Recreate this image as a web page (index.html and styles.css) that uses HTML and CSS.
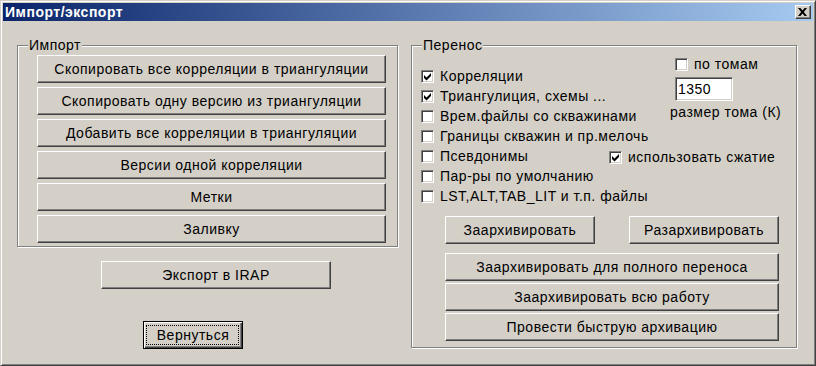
FILE: index.html
```html
<!DOCTYPE html>
<html lang="ru">

<head>
    <meta charset="UTF-8">
    <meta name="viewport" content="width=device-width, initial-scale=1.0">
    <title>Импорт/экспорт</title>
    <link rel="stylesheet" href="styles.css">
</head>

<body>
    <div class="dlg">
        <div class="caption">
            <span class="caption-text">Импорт/экспорт</span>
            <span class="close-btn">
                <svg width="9" height="8" viewBox="0 0 9 8"><path d="M0 0H2.4L4.5 2.4L6.6 0H9L5.8 4L9 8H6.6L4.5 5.6L2.4 8H0L3.2 4Z" fill="#000"/></svg>
            </span>
        </div>

        <div class="client">
            <div class="col-left">
                <div class="group group-import">
                    <span class="legend">Импорт</span>
                    <button class="btn">Скопировать все корреляции в триангуляции</button>
                    <button class="btn">Скопировать одну версию из триангуляции</button>
                    <button class="btn">Добавить все корреляции в триангуляции</button>
                    <button class="btn">Версии одной корреляции</button>
                    <button class="btn">Метки</button>
                    <button class="btn">Заливку</button>
                </div>
                <button class="btn btn-irap">Экспорт в IRAP</button>
                <button class="btn btn-back">Вернуться</button>
            </div>

            <div class="group group-transfer">
                <span class="legend">Перенос</span>
                <div class="opts">
                    <div class="checklist">
                        <div class="chk"><span class="box"><svg width="11" height="11" viewBox="1 1 11 11"><polygon points="3,5 5.5,7.5 10,3 10,6 5.5,10.5 3,8" fill="#000"/></svg></span>Корреляции</div>
                        <div class="chk"><span class="box"><svg width="11" height="11" viewBox="1 1 11 11"><polygon points="3,5 5.5,7.5 10,3 10,6 5.5,10.5 3,8" fill="#000"/></svg></span>Триангулиция, схемы ...</div>
                        <div class="chk"><span class="box"></span>Врем.файлы со скважинами</div>
                        <div class="chk"><span class="box"></span>Границы скважин и пр.мелочь</div>
                        <div class="chk"><span class="box"></span>Псевдонимы</div>
                        <div class="chk"><span class="box"></span>Пар-ры по умолчанию</div>
                        <div class="chk"><span class="box"></span>LST,ALT,TAB_LIT и т.п. файлы</div>
                    </div>
                    <div class="side">
                        <div class="chk chk-vol"><span class="box"></span>по томам</div>
                        <input class="edit" type="text" value="1350">
                        <div class="edit-label">размер тома (К)</div>
                        <div class="chk chk-zip"><span class="box"><svg width="11" height="11" viewBox="1 1 11 11"><polygon points="3,5 5.5,7.5 10,3 10,6 5.5,10.5 3,8" fill="#000"/></svg></span>использовать сжатие</div>
                    </div>
                </div>
                <div class="arch-row">
                    <button class="btn btn-half">Заархивировать</button>
                    <button class="btn btn-half">Разархивировать</button>
                </div>
                <div class="arch-list">
                    <button class="btn btn-wide">Заархивировать для полного переноса</button>
                    <button class="btn btn-wide">Заархивировать всю работу</button>
                    <button class="btn btn-wide">Провести быструю архивацию</button>
                </div>
            </div>
        </div>
    </div>
</body>

</html>
```

FILE: styles.css
```css
* {
    margin: 0;
    padding: 0;
    box-sizing: border-box;
}
body {
    background-color: #d4d0c8;
    font-family: "Liberation Sans", Arial, sans-serif;
    font-size: 14px;
    letter-spacing: 0.5px;
    color: #000;
}
.dlg {
    width: 816px;
    height: 366px;
    padding: 2px;
    background-color: #d4d0c8;
    border: 1px solid;
    border-color: #d4d0c8 #404040 #404040 #d4d0c8;
    box-shadow: inset 1px 1px #fff, inset -1px -1px #808080;
}
.caption {
    height: 18px;
    display: flex;
    align-items: center;
    justify-content: space-between;
    padding: 0 2px;
    background: linear-gradient(to right, #0a246a, #a6caf0);
}
.caption-text {
    color: #fff;
    font-weight: bold;
    font-size: 14px;
    line-height: 18px;
}
.close-btn {
    width: 16px;
    height: 14px;
    display: flex;
    align-items: center;
    justify-content: center;
    padding-right: 1px;
    background-color: #d4d0c8;
    border: 1px solid;
    border-color: #fff #404040 #404040 #fff;
    box-shadow: inset -1px -1px #808080;
}
.client {
    display: flex;
    align-items: flex-start;
    padding: 24px 0 0 14px;
}
.col-left {
    width: 381px;
    display: flex;
    flex-direction: column;
    align-items: flex-start;
}
.group {
    position: relative;
    border: 1px solid #808080;
    box-shadow: inset 1px 1px #fff, 1px 1px #fff;
}
.legend {
    position: absolute;
    top: -9px;
    left: 10px;
    padding: 0 1px;
    line-height: 16px;
    background-color: #d4d0c8;
}
.group-import {
    width: 381px;
    height: 202px;
    padding: 9px 11px 0 19px;
    display: flex;
    flex-direction: column;
    gap: 4px;
}
.btn {
    display: block;
    height: 28px;
    font-family: inherit;
    font-size: 14px;
    letter-spacing: inherit;
    color: #000;
    text-align: center;
    background-color: #d4d0c8;
    border: 1px solid;
    border-color: #fff #404040 #404040 #fff;
    box-shadow: inset -1px -1px #808080;
}
.group-import .btn {
    width: 349px;
}
.btn-irap {
    width: 230px;
    margin: 14px 0 0 84px;
}
.btn-back {
    position: relative;
    width: 100px;
    margin: 32px 0 0 126px;
    border-color: #000;
    box-shadow: inset 1px 1px #fff, inset -1px -1px #404040, inset -2px -2px #808080;
}
.btn-back::after {
    content: "";
    position: absolute;
    top: 3px;
    left: 2px;
    right: 3px;
    bottom: 3px;
    border: 1px dotted #000;
}
.group-transfer {
    width: 386px;
    height: 303px;
    margin-left: 13px;
    padding: 10px 0 0 9px;
}
.opts {
    display: flex;
}
.checklist {
    width: 249px;
    margin-top: 10px;
}
.chk {
    height: 20px;
    display: flex;
    align-items: center;
    gap: 6px;
    white-space: nowrap;
}
.box {
    width: 13px;
    height: 13px;
    flex-shrink: 0;
    display: flex;
    background-color: #fff;
    border: 1px solid;
    border-color: #808080 #fff #fff #808080;
    box-shadow: inset 1px 1px #404040, inset -1px -1px #d4d0c8;
}
.side {
    display: flex;
    flex-direction: column;
}
.chk-vol {
    height: 16px;
    margin-left: 5px;
}
.edit {
    width: 58px;
    height: 24px;
    margin: 5px 0 0 5px;
    padding: 0 2px;
    font-family: inherit;
    font-size: 14px;
    letter-spacing: inherit;
    color: #000;
    background-color: #fff;
    border: 1px solid;
    border-color: #808080 #fff #fff #808080;
    box-shadow: inset 1px 1px #404040, inset -1px -1px #d4d0c8;
    outline: none;
}
.edit-label {
    margin-top: 3px;
    line-height: 16px;
    white-space: nowrap;
}
.chk-zip {
    margin: 27px 0 0 -61px;
}
.arch-row {
    display: flex;
    gap: 34px;
    margin: 10px 0 0 24px;
}
.btn-half {
    width: 150px;
}
.arch-list {
    display: flex;
    flex-direction: column;
    gap: 2px;
    margin: 9px 0 0 24px;
}
.btn-wide {
    width: 334px;
}
```
